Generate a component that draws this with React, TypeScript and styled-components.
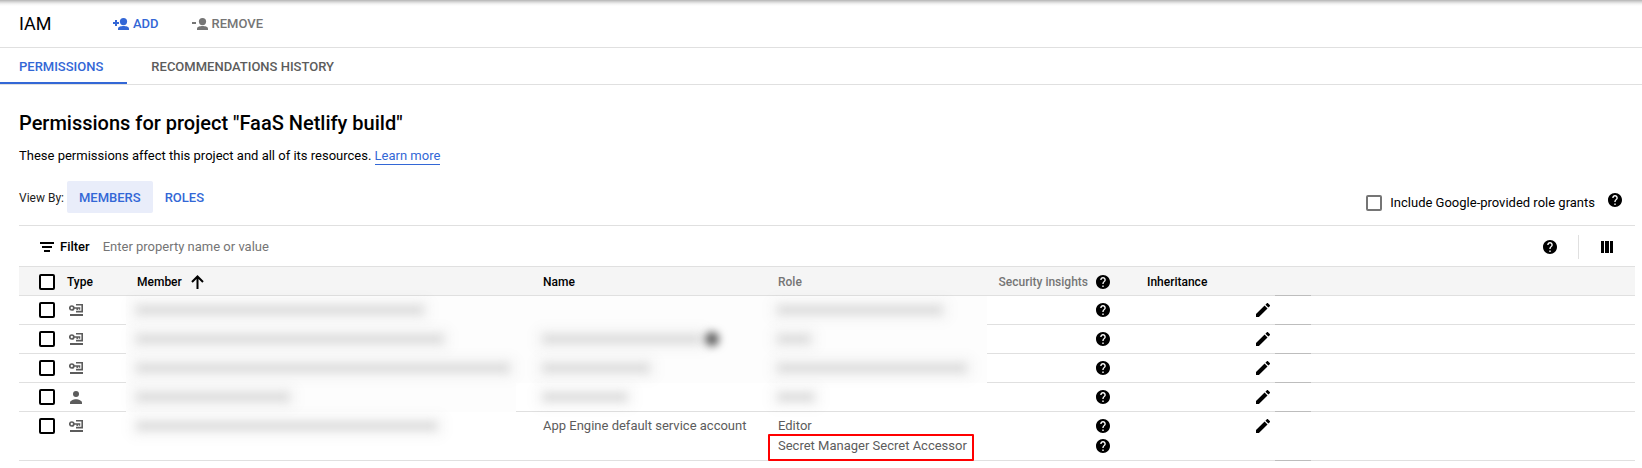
import React from "react";
import styled, { createGlobalStyle, css } from "styled-components";

const blue = "#3367d6";
const line = "#e0e0e0";

const GlobalStyle = createGlobalStyle`
  *, *::before, *::after { box-sizing: border-box; }
  body {
    margin: 0;
    background: #fff;
    color: #000;
    font-family: Roboto, "Liberation Sans", sans-serif;
    font-size: 13px;
    line-height: 20px;
  }
  button, input { font: inherit; color: inherit; }
`;

const Page = styled.div`
  min-width: 1340px;
`;

const TopBar = styled.header`
  display: flex;
  align-items: center;
  height: 48px;
  padding: 0 19px;
  border-bottom: 1px solid ${line};
  background: linear-gradient(#b4b4b4, #d8d8d8 2px, #f4f4f4 4px, #fff 6px);
`;

const Title = styled.h1`
  margin: 0;
  width: 94px;
  font-size: 18px;
  font-weight: 400;
  line-height: 24px;
`;

const ToolButton = styled.button<{ $muted?: boolean }>`
  display: flex;
  align-items: center;
  gap: 4px;
  margin-right: 33px;
  padding: 0;
  border: 0;
  background: none;
  font-weight: 500;
  color: ${(p) => (p.$muted ? "#757575" : blue)};
`;

const Tabs = styled.nav`
  display: flex;
  height: 37px;
  border-bottom: 1px solid ${line};
`;

const Tab = styled.a<{ $active?: boolean }>`
  display: flex;
  align-items: center;
  padding: 4px 24px 0 19px;
  border-bottom: 2px solid ${(p) => (p.$active ? blue : "transparent")};
  color: ${(p) => (p.$active ? blue : "#5c5c5c")};
  font-weight: 500;
  text-decoration: none;
  & + & { padding-left: 24px; }
`;

const Main = styled.main`
  padding: 26px 7px 0 19px;
`;

const Heading = styled.h2`
  margin: 0;
  font-size: 20px;
  font-weight: 500;
  line-height: 24px;
`;

const Intro = styled.p`
  margin: 11px 0 0;
`;

const Link = styled.a`
  display: inline-block;
  line-height: 16px;
  color: ${blue};
  text-decoration: none;
  border-bottom: 1px solid ${blue};
`;

const ViewBar = styled.div`
  display: flex;
  align-items: center;
  height: 56px;
  margin-top: 3px;
`;

const ViewLabel = styled.span`
  font-size: 12px;
  margin-right: 3px;
  padding-top: 2px;
  color: #212121;
`;

const ViewButton = styled.button<{ $active?: boolean }>`
  height: 32px;
  padding: 2px 12px 0;
  border: 0;
  border-radius: 2px;
  font-weight: 500;
  color: ${blue};
  background: ${(p) => (p.$active ? "#e9edfa" : "none")};
`;

const GrantOption = styled.div`
  display: flex;
  align-items: flex-start;
  margin: 12px 13px 0 auto;
`;

const GrantLabel = styled.label`
  display: flex;
  align-items: center;
  gap: 8px;
  margin-right: 13px;
`;

const Check = styled.input.attrs({ type: "checkbox" })<{ $muted?: boolean }>`
  appearance: none;
  display: block;
  width: 16px;
  height: 16px;
  margin: 0;
  border: 2px solid ${(p) => (p.$muted ? "#757575" : "#000")};
  border-radius: 2px;
  background: #fff;
`;

const FilterBar = styled.div`
  display: flex;
  align-items: center;
  height: 41px;
  padding: 1px 21px 0;
  border-top: 1px solid ${line};
`;

const FilterLabel = styled.label`
  display: flex;
  align-items: center;
  gap: 6px;
  font-weight: 500;
`;

const FilterInput = styled.input`
  flex: 1;
  min-width: 0;
  margin-left: 13px;
  padding: 0;
  border: 0;
  outline: 0;
  background: none;
  &::placeholder { color: #757575; opacity: 1; }
`;

const Divider = styled.span`
  width: 1px;
  height: 24px;
  margin: 0 21px;
  background: ${line};
`;

const IconButton = styled.button`
  display: block;
  padding: 0;
  border: 0;
  background: none;
  color: #000;
  svg { display: block; }
`;

const Table = styled.table`
  width: 100%;
  table-layout: fixed;
  border-collapse: separate;
  border-spacing: 0;
`;

const Col = styled.col<{ $w?: number }>`
  ${(p) => p.$w && css`width: ${p.$w}px;`}
`;

const Th = styled.th<{ $pad?: number; $muted?: boolean; $dark?: boolean }>`
  height: 30px;
  padding: 1px 0 0 ${(p) => p.$pad ?? 0}px;
  border-top: 1px solid ${line};
  border-bottom: 1px solid ${(p) => (p.$dark ? "#bdbdbd" : line)};
  background: #f5f5f5;
  font-size: 12px;
  font-weight: 500;
  text-align: left;
  color: ${(p) => (p.$muted ? "#757575" : "#000")};
`;

const Td = styled.td<{ $pad?: number; $plain?: boolean; $dark?: boolean }>`
  padding: 4px 0 4px ${(p) => p.$pad ?? 0}px;
  border-bottom: 1px solid ${(p) => (p.$plain ? "transparent" : p.$dark ? "#bdbdbd" : line)};
  background: ${(p) => (p.$plain ? "#fdfdfd" : "none")};
  vertical-align: top;
  color: #5c5c5c;
`;

const Line = styled.div<{ $gap?: number; $end?: boolean }>`
  display: flex;
  align-items: center;
  justify-content: ${(p) => (p.$end ? "flex-end" : "flex-start")};
  gap: ${(p) => p.$gap ?? 0}px;
  height: 20px;
  padding-right: ${(p) => (p.$end ? 17 : 0)}px;
`;

const Redacted = styled.span<{ $w: number }>`
  width: ${(p) => p.$w}px;
  height: 8px;
  background: #d8d8d8;
  box-shadow: 0 0 10px 8px rgba(0, 0, 0, 0.03);
  filter: blur(5px);
`;

const RedactedDot = styled.span`
  width: 14px;
  height: 14px;
  margin-left: 4px;
  border-radius: 50%;
  background: #555;
  filter: blur(4px);
`;

const Highlight = styled.span`
  position: relative;
  &::after {
    content: "";
    position: absolute;
    inset: -2px -7px -5px -10px;
    border: 2px solid #ff0000;
    border-radius: 1px;
  }
`;

const Help = () => (
  <svg width="14" height="14" viewBox="2 2 20 20" fill="currentColor" aria-hidden="true">
    <path d="M12 2C6.48 2 2 6.48 2 12s4.48 10 10 10 10-4.48 10-10S17.52 2 12 2zm1 17h-2v-2h2v2zm2.07-7.75l-.9.92C13.45 12.9 13 13.5 13 15h-2v-.5c0-1.1.45-2.1 1.17-2.83l1.24-1.26c.37-.36.59-.86.59-1.41 0-1.1-.9-2-2-2s-2 .9-2 2H8c0-2.21 1.79-4 4-4s4 1.79 4 4c0 .88-.36 1.68-.93 2.25z" />
  </svg>
);

const Pencil = () => (
  <svg width="14" height="14" viewBox="3 3 18 18" fill="currentColor" aria-hidden="true">
    <path d="M3 17.25V21h3.75L17.81 9.94l-3.75-3.75L3 17.25zM20.71 7.04c.39-.39.39-1.02 0-1.41l-2.34-2.34c-.39-.39-1.02-.39-1.41 0l-1.83 1.83 3.75 3.75 1.83-1.83z" />
  </svg>
);

const PersonSign = ({ minus }: { minus?: boolean }) => (
  <svg width="16" height="12" viewBox="0 0 16 12" fill="currentColor" aria-hidden="true">
    <circle cx="10.5" cy="3.6" r="3.6" />
    <path d="M5 12v-1.5C5 8.7 8.2 8 10.5 8S16 8.7 16 10.5V12z" />
    <path d={minus ? "M0 4h4v2H0z" : "M2 2h2v2h2v2H4v2H2V6H0V4h2z"} />
  </svg>
);

const ServiceAccount = () => (
  <svg width="14" height="12" viewBox="0 0 14 12" fill="none" stroke="#5c5c5c" role="img" aria-label="Service account">
    <circle cx="2.8" cy="4" r="2" strokeWidth="1.700" />
    <path d="M5 4h6.300M8.200 4v2M10.500 4v1.800" strokeWidth="1.500" />
    <path d="M7 .8h6.200v6.800H7" strokeWidth="1.600" />
    <path d="M1 11h13" strokeWidth="2" />
  </svg>
);

const Person = () => (
  <svg width="14" height="13" viewBox="0 0 14 13" fill="#5c5c5c" role="img" aria-label="User">
    <circle cx="7" cy="3" r="3" />
    <path d="M1 13v-1.5C1 9.500 4.500 8.200 7 8.200s6 1.300 6 3.300V13z" />
  </svg>
);

const ArrowUp = () => (
  <svg width="13" height="14" viewBox="0 0 13 14" fill="none" stroke="#000" strokeWidth="2" aria-hidden="true">
    <path d="M6.500 14V1.500M1 7l5.500-5.500L12 7" />
  </svg>
);

type Row = {
  user?: boolean;
  member: number;
  name?: number;
  dot?: boolean;
  role?: number;
};

const rows: Row[] = [
  { member: 286, role: 164 },
  { member: 306, name: 158, dot: true, role: 32 },
  { member: 372, name: 106, role: 188 },
  { user: true, member: 152, name: 84, role: 36 },
  { member: 300 },
];

const columns = [48, 59, 390, 246, 225, 140, 112, 36, 36];

const HelpButton = () => (
  <IconButton type="button" aria-label="Help"><Help /></IconButton>
);

export default function App() {
  return (
    <Page>
      <GlobalStyle />
      <TopBar>
        <Title>IAM</Title>
        <ToolButton type="button"><PersonSign />ADD</ToolButton>
        <ToolButton type="button" $muted><PersonSign minus />REMOVE</ToolButton>
      </TopBar>
      <Tabs>
        <Tab href="#permissions" $active>PERMISSIONS</Tab>
        <Tab href="#history">RECOMMENDATIONS HISTORY</Tab>
      </Tabs>
      <Main>
        <Heading>Permissions for project "FaaS Netlify build"</Heading>
        <Intro>
          These permissions affect this project and all of its resources. <Link href="#learn">Learn more</Link>
        </Intro>
        <ViewBar>
          <ViewLabel>View By:</ViewLabel>
          <ViewButton type="button" $active>MEMBERS</ViewButton>
          <ViewButton type="button">ROLES</ViewButton>
          <GrantOption>
            <GrantLabel><Check $muted />Include Google-provided role grants</GrantLabel>
            <HelpButton />
          </GrantOption>
        </ViewBar>
        <FilterBar>
          <FilterLabel htmlFor="filter">
            <svg width="14" height="10" viewBox="0 0 14 10" aria-hidden="true">
              <path d="M0 0h14v2H0zM2 4h10v2H2zM4 8h6v2H4z" />
            </svg>
            Filter
          </FilterLabel>
          <FilterInput id="filter" placeholder="Enter property name or value" />
          <HelpButton />
          <Divider />
          <IconButton type="button" aria-label="Columns">
            <svg width="14" height="12" viewBox="0 0 14 12" aria-hidden="true">
              <path d="M1 0h3v12H1zM5 0h4v12H5zM10 0h3v12h-3z" />
            </svg>
          </IconButton>
        </FilterBar>
        <Table>
          <colgroup>
            {columns.map((w, i) => <Col key={i} $w={w} />)}
            <Col />
          </colgroup>
          <thead>
            <tr>
              <Th $pad={20}><Check aria-label="Select all members" /></Th>
              <Th>Type</Th>
              <Th $pad={11}><Line $gap={9}>Member<ArrowUp /></Line></Th>
              <Th $pad={27}>Name</Th>
              <Th $pad={16} $muted>Role</Th>
              <Th $muted><Line $gap={8} $end>Security insights<HelpButton /></Line></Th>
              <Th $pad={20}>Inheritance</Th>
              <Th />
              <Th $dark />
              <Th />
            </tr>
          </thead>
          <tbody>
            {rows.map((row, i) => {
              const last = i === rows.length - 1;
              return (
                <tr key={i}>
                  <Td $pad={20}><Line><Check aria-label={`Select member ${i + 1}`} /></Line></Td>
                  <Td $pad={2}><Line>{row.user ? <Person /> : <ServiceAccount />}</Line></Td>
                  <Td $pad={11} $plain={!last}><Line><Redacted $w={row.member} /></Line></Td>
                  <Td $pad={27} $plain={i < 3}>
                    <Line>
                      {last && "App Engine default service account"}
                      {row.name && <Redacted $w={row.name} />}
                      {row.dot && <RedactedDot />}
                    </Line>
                  </Td>
                  <Td $pad={16} $plain={i < 3}>
                    {row.role && <Line><Redacted $w={row.role} /></Line>}
                    {last && <Line>Editor</Line>}
                    {last && <Line><Highlight>Secret Manager Secret Accessor</Highlight></Line>}
                  </Td>
                  <Td>
                    <Line $end><HelpButton /></Line>
                    {last && <Line $end><HelpButton /></Line>}
                  </Td>
                  <Td />
                  <Td $pad={17}><Line><IconButton type="button" aria-label="Edit member"><Pencil /></IconButton></Line></Td>
                  <Td $dark />
                  <Td />
                </tr>
              );
            })}
          </tbody>
        </Table>
      </Main>
    </Page>
  );
}
